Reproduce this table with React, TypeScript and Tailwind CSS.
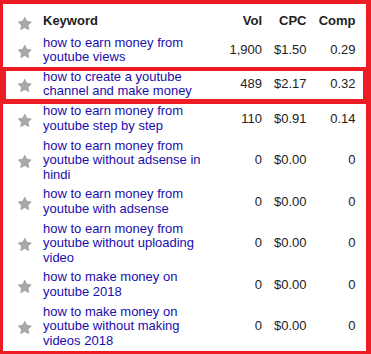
const rows = [
  { kw: "how to earn money from youtube views", vol: "1,900", cpc: "$1.50", comp: "0.29" },
  { kw: "how to create a youtube channel and make money", vol: "489", cpc: "$2.17", comp: "0.32", marked: true },
  { kw: "how to earn money from youtube step by step", vol: "110", cpc: "$0.91", comp: "0.14" },
  { kw: "how to earn money from youtube without adsense in hindi", vol: "0", cpc: "$0.00", comp: "0" },
  { kw: "how to earn money from youtube with adsense", vol: "0", cpc: "$0.00", comp: "0" },
  { kw: "how to earn money from youtube without uploading video", vol: "0", cpc: "$0.00", comp: "0" },
  { kw: "how to make money on youtube 2018", vol: "0", cpc: "$0.00", comp: "0" },
  { kw: "how to make money on youtube without making videos 2018", vol: "0", cpc: "$0.00", comp: "0" },
];

const Star = ({ className = "" }: { className?: string }) => (
  <svg width="15.5" height="15.5" viewBox="0 0 24 24" className={className}>
    <path
      d="M12 2l3.09 6.26L22 9.27l-5 4.87 1.18 6.88L12 17.77l-6.18 3.25L7 14.14 2 9.27l6.91-1.01L12 2z"
      fill="#a9a9a9"
      stroke="#8f8f8f"
      strokeWidth="1"
      strokeLinejoin="round"
    />
  </svg>
);

const App: React.FC = () => {
  return (
    <div className="w-[371px] h-[354px] bg-white border-solid border-[#ed1c24] border-t-4 border-l-[3px] border-r-[5px] border-b-[3px] font-['Liberation_Sans',Arial,sans-serif] text-[13px] leading-[14.4px]">
      {/* header */}
      <div className="flex items-start pt-[9.5px] pb-[1.5px] font-bold text-[#222]">
        <div className="w-[40px] pl-[3px] flex justify-center mt-[2.5px]">
          <Star />
        </div>
        <div className="w-[172px]">Keyword</div>
        <div className="w-[47px] text-right">Vol</div>
        <div className="w-[44.5px] text-right">CPC</div>
        <div className="w-[49px] text-right">Comp</div>
      </div>

      {rows.map((r, i) => (
        <div key={i} className="relative flex items-center py-[2.75px]">
          <div className="w-[40px] pl-[3px] flex justify-center mt-[3px]">
            <Star />
          </div>
          <div className="w-[172px] pr-[8px] text-[#1a0dab]">{r.kw}</div>
          <div className="w-[47px] text-right text-[#222]">{r.vol}</div>
          <div className="w-[44.5px] text-right text-[#222]">{r.cpc}</div>
          <div className="w-[49px] text-right text-[#222]">{r.comp}</div>
          {r.marked && (
            <div className="absolute left-0 right-0 top-0 bottom-[-2.6px] border-solid border-[#ed1c24] border-t-[4.5px] border-b-[5px] border-x-[3px]" />
          )}
        </div>
      ))}
    </div>
  );
};

export default App;
